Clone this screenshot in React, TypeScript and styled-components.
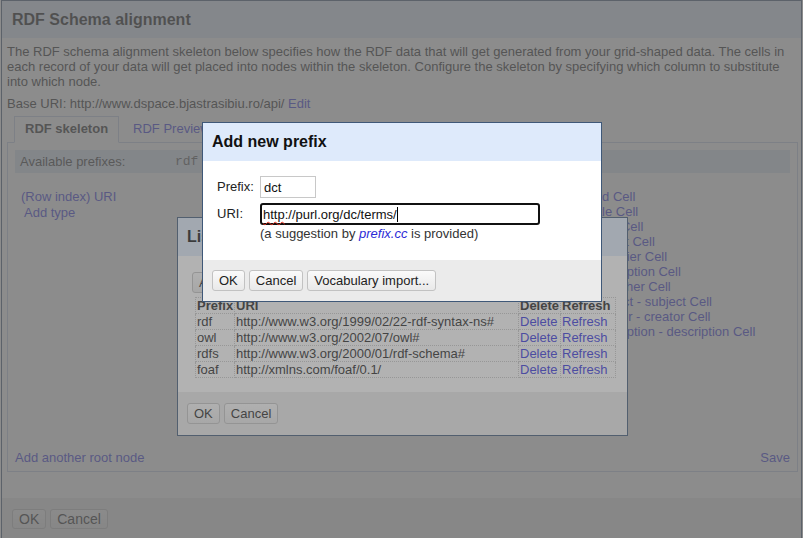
import styled, { createGlobalStyle } from 'styled-components';

const LINK = '#3333dd';
const FRAME = '#3f5878';
const HEAD = '#deeafb';
const FOOT = '#ebebeb';
const TAB_LINE = '#c3d1e8';

const GlobalStyle = createGlobalStyle`
  html, body {
    margin: 0;
    padding: 0;
  }
  body {
    font-family: "Liberation Sans", Arial, sans-serif;
    font-size: 13px;
    color: #222;
    background: #fff;
  }
`;

const prefixes = [
  { name: 'rdf', uri: 'http://www.w3.org/1999/02/22-rdf-syntax-ns#' },
  { name: 'owl', uri: 'http://www.w3.org/2002/07/owl#' },
  { name: 'rdfs', uri: 'http://www.w3.org/2000/01/rdf-schema#' },
  { name: 'foaf', uri: 'http://xmlns.com/foaf/0.1/' },
];

const links = [
  { prop: 'dc:identifier', target: 'uid Cell' },
  { prop: 'dc:title', target: 'title Cell' },
  { prop: 'dc:date', target: 'date Cell' },
  { prop: 'dc:format', target: 'format Cell' },
  { prop: 'dc:identifier', target: 'identifier Cell' },
  { prop: 'dc:description', target: 'description Cell' },
  { prop: 'dc:publisher', target: 'publisher Cell' },
  { prop: 'dc:subject', target: 'subject - subject Cell' },
  { prop: 'dc:creator', target: 'creator - creator Cell' },
  { prop: 'dc:description', target: 'description - description Cell' },
];

export default function App() {
  return (
    <Page>
      <GlobalStyle />

      <MainFrame>
        <MainHeader>RDF Schema alignment</MainHeader>
        <MainBody>
          <Intro>
            The RDF schema alignment skeleton below specifies how the RDF data that will get
            generated from your grid-shaped data. The cells in each record of your data will get
            placed into nodes within the skeleton. Configure the skeleton by specifying which
            column to substitute into which node.
          </Intro>
          <Line>
            Base URI: http://www.dspace.bjastrasibiu.ro/api/ <Link>Edit</Link>
          </Line>

          <TabBar>
            <Tab $active>RDF skeleton</Tab>
            <Tab>RDF Preview</Tab>
          </TabBar>
          <Panel>
            <PrefixBar>
              <PrefixLabel>Available prefixes:</PrefixLabel>
              {prefixes.map((p) => (
                <PrefixName key={p.name}>{p.name}</PrefixName>
              ))}
            </PrefixBar>

            <Skeleton>
              <SubjectCell>
                <Link>(Row index) URI</Link>
                <AddType>
                  <Link>Add type</Link>
                </AddType>
              </SubjectCell>
              <PropCell>
                {links.map((l, i) => (
                  <Line key={i}>
                    <Link>{l.prop}</Link> &rarr;
                  </Line>
                ))}
              </PropCell>
              <TargetCell>
                {links.map((l, i) => (
                  <Line key={i}>
                    <Link>{l.target}</Link>
                  </Line>
                ))}
              </TargetCell>
            </Skeleton>

            <PanelFooter>
              <Link>Add another root node</Link>
              <Link>Save</Link>
            </PanelFooter>
          </Panel>
        </MainBody>
        <Footer $pad="11px 10px">
          <Button $large>OK</Button>
          <Button $large>Cancel</Button>
        </Footer>
      </MainFrame>

      <Overlay />

      <FloatingFrame $x={177} $y={217} $w={451} $h={219}>
        <Header>List of prefixes</Header>
        <ListBody>
          <Button>Add prefix</Button>
          <PrefixTable>
            <colgroup>
              <col style={{ width: 39 }} />
              <col style={{ width: 284 }} />
              <col style={{ width: 42 }} />
              <col style={{ width: 55 }} />
            </colgroup>
            <thead>
              <tr>
                <th>Prefix</th>
                <th>URI</th>
                <th>Delete</th>
                <th>Refresh</th>
              </tr>
            </thead>
            <tbody>
              {prefixes.map((p) => (
                <tr key={p.name}>
                  <td>{p.name}</td>
                  <td>{p.uri}</td>
                  <td>
                    <Link>Delete</Link>
                  </td>
                  <td>
                    <Link>Refresh</Link>
                  </td>
                </tr>
              ))}
            </tbody>
          </PrefixTable>
        </ListBody>
        <Footer $pad="11px 9px">
          <Button>OK</Button>
          <Button>Cancel</Button>
        </Footer>
      </FloatingFrame>

      <Overlay />

      <FloatingFrame $x={202} $y={122} $w={400} $h={180}>
        <Header>Add new prefix</Header>
        <FormBody>
          <FieldLabel>Prefix:</FieldLabel>
          <Field $w={56}>dct</Field>
          <FieldLabel>URI:</FieldLabel>
          <div>
            <Field $w={280} $focused>
              <Misspelt>http</Misspelt>://purl.org/dc/terms/
              <Caret />
            </Field>
            <Hint>
              (a suggestion by <HintLink>prefix.cc</HintLink> is provided)
            </Hint>
          </div>
        </FormBody>
        <Footer $pad="10px 9px">
          <Button>OK</Button>
          <Button>Cancel</Button>
          <Button>Vocabulary import...</Button>
        </Footer>
      </FloatingFrame>
    </Page>
  );
}

const Page = styled.div`
  position: relative;
  width: 803px;
  height: 538px;
  overflow: hidden;
`;

const Overlay = styled.div`
  position: absolute;
  inset: 0;
  background: #666;
  opacity: 0.5;
`;

const Frame = styled.div`
  box-sizing: border-box;
  display: flex;
  flex-direction: column;
  background: #fff;
  border: 1px solid ${FRAME};
  overflow: hidden;
`;

const MainFrame = styled(Frame)`
  margin: 0 1px;
  height: 560px;
`;

const FloatingFrame = styled(Frame)<{ $x: number; $y: number; $w: number; $h: number }>`
  position: absolute;
  left: ${(p) => p.$x}px;
  top: ${(p) => p.$y}px;
  width: ${(p) => p.$w}px;
  height: ${(p) => p.$h}px;
`;

const Header = styled.div`
  flex: none;
  box-sizing: border-box;
  height: 38px;
  padding: 0 9px;
  display: flex;
  align-items: center;
  background: ${HEAD};
  color: #111;
  font-size: 16px;
  font-weight: bold;
`;

const MainHeader = styled(Header)`
  height: 37px;
  padding: 0 10px;
`;

const MainBody = styled.div`
  flex: none;
  box-sizing: border-box;
  height: 460px;
  padding: 6px 3px 0 5px;
  display: flex;
  flex-direction: column;
`;

const Intro = styled.p`
  margin: 0 0 7px;
  line-height: 15px;
`;

const Line = styled.div`
  line-height: 15px;
  white-space: nowrap;
`;

const Link = styled.a`
  color: ${LINK};
  text-decoration: none;
  cursor: pointer;
`;

const TabBar = styled.div`
  display: flex;
  align-items: flex-end;
  gap: 3px;
  margin-top: 5px;
  padding-left: 7px;
  position: relative;
`;

const Tab = styled.div<{ $active?: boolean }>`
  padding: 4px 10px 6px;
  line-height: 15px;
  margin-bottom: -1px;
  border: 1px solid ${(p) => (p.$active ? TAB_LINE : 'transparent')};
  border-bottom: 1px solid ${(p) => (p.$active ? '#fff' : 'transparent')};
  background: ${(p) => (p.$active ? '#fff' : 'transparent')};
  font-weight: ${(p) => (p.$active ? 'bold' : 'normal')};
  color: ${(p) => (p.$active ? '#222' : LINK)};
`;

const Panel = styled.div`
  box-sizing: border-box;
  height: 330px;
  border: 1px solid ${TAB_LINE};
  padding: 7px 7px 6px;
  display: flex;
  flex-direction: column;
`;

const PrefixBar = styled.div`
  height: 23px;
  padding-left: 5px;
  display: flex;
  align-items: center;
  background: #dde7f5;
  white-space: nowrap;
  overflow: hidden;
`;

const PrefixLabel = styled.span`
  width: 155px;
  color: #333;
`;

const PrefixName = styled.span`
  margin-right: 9px;
  font-family: "Liberation Mono", "Courier New", monospace;
  color: #555;
`;

const Skeleton = styled.div`
  margin-top: 16px;
  padding-left: 6px;
  display: grid;
  grid-template-columns: 220px 351px 1fr;
  align-items: start;
`;

const SubjectCell = styled.div`
  line-height: 15px;
`;

const AddType = styled.div`
  margin-top: 1px;
  padding-left: 3px;
`;

const PropCell = styled.div`
  text-align: right;
  padding-right: 12px;
`;

const TargetCell = styled.div``;

const PanelFooter = styled.div`
  margin-top: auto;
  display: flex;
  justify-content: space-between;
  line-height: 15px;
`;

const Footer = styled.div<{ $pad: string }>`
  flex: none;
  box-sizing: border-box;
  padding: ${(p) => p.$pad};
  background: ${FOOT};
  display: flex;
  gap: 4px;
  align-items: flex-start;
`;

const Button = styled.button<{ $large?: boolean }>`
  font-family: "Liberation Sans", Arial, sans-serif;
  font-size: ${(p) => (p.$large ? 14 : 13)}px;
  line-height: ${(p) => (p.$large ? 16 : 15)}px;
  padding: ${(p) => (p.$large ? '1px 6px' : '2px 6px')};
  margin: 0;
  color: #222;
  border: 1px solid #c2c2c2;
  border-radius: 3px;
  background: linear-gradient(#fafafa, #e9e9e9);
  white-space: nowrap;
`;

const ListBody = styled.div`
  flex: 1;
  padding: 16px 12px 0 14px;
`;

const PrefixTable = styled.table`
  margin: 4px 0 0 3px;
  width: 420px;
  table-layout: fixed;
  border-collapse: collapse;
  line-height: 15px;

  th,
  td {
    padding: 0 1px;
    border: 1px dotted #c8c8c8;
    text-align: left;
    white-space: nowrap;
    overflow: hidden;
  }

  th {
    font-weight: bold;
    color: #222;
  }
`;

const FormBody = styled.div`
  flex: 1;
  padding: 15px 14px 0;
  display: grid;
  grid-template-columns: 43px auto;
  grid-auto-rows: min-content;
  row-gap: 5px;
  align-items: start;
`;

const FieldLabel = styled.div`
  height: 22px;
  line-height: 22px;
  color: #222;
`;

const Field = styled.div<{ $w: number; $focused?: boolean }>`
  box-sizing: border-box;
  width: ${(p) => p.$w}px;
  height: 22px;
  display: flex;
  align-items: center;
  padding: 0 ${(p) => (p.$focused ? 1 : 3)}px;
  border: ${(p) => (p.$focused ? '2px solid #111' : '1px solid #c8c8c8')};
  border-radius: ${(p) => (p.$focused ? 3 : 0)}px;
  background: #fff;
  color: #111;
  white-space: pre;
`;

const Misspelt = styled.span`
  text-decoration: underline wavy #e0301e;
  text-decoration-skip-ink: none;
  text-underline-offset: 2px;
  text-decoration-thickness: 1px;
`;

const Caret = styled.span`
  display: inline-block;
  width: 0;
  height: 15px;
  border-left: 1px solid #000;
`;

const Hint = styled.div`
  line-height: 15px;
  margin-top: 1px;
  color: #333;
`;

const HintLink = styled.a`
  color: #2b2bd6;
  font-style: italic;
`;
